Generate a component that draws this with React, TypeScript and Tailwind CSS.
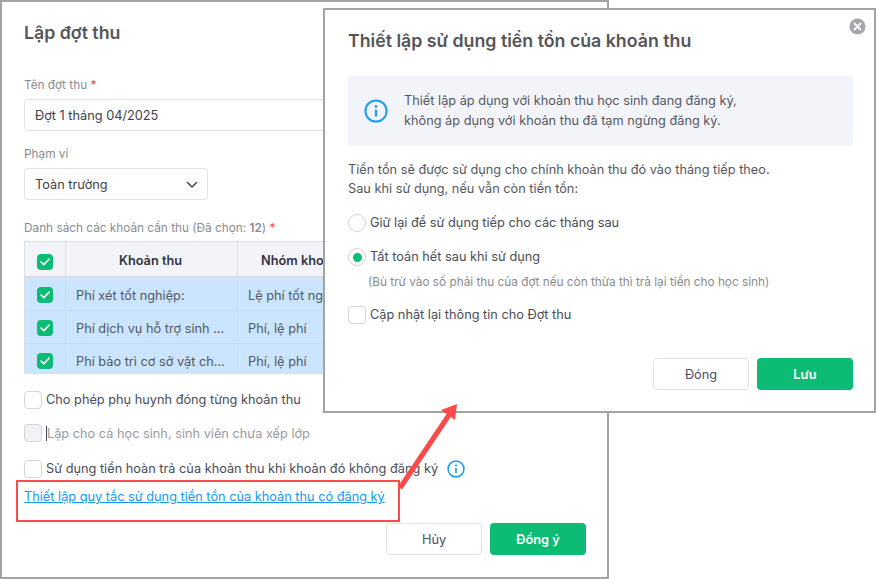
const rows = [
  { name: "Phí xét tốt nghiệp:", group: "Lệ phí tốt nghiệp" },
  { name: "Phí dịch vụ hỗ trợ sinh ...", group: "Phí, lệ phí" },
  { name: "Phí bảo trì cơ sở vật ch...", group: "Phí, lệ phí" },
];

function GreenCheck({ size }: { size: string }) {
  return (
    <span className={`flex items-center justify-center rounded-[4px] bg-[#0cbc74] ${size}`}>
      <svg width="10" height="8" viewBox="0 0 10 8" fill="none">
        <path d="M1 4l2.8 2.6L9 1.2" stroke="#fff" strokeWidth="1.6" strokeLinecap="round" strokeLinejoin="round" />
      </svg>
    </span>
  );
}

function EmptyBox({ disabled }: { disabled?: boolean }) {
  return (
    <span
      className={`block h-[18px] w-[18px] shrink-0 rounded-[4px] border border-[#d4d5da] ${
        disabled ? "bg-[#f2f3f7]" : "bg-white"
      }`}
    />
  );
}

function InfoIcon({ size }: { size: number }) {
  return (
    <svg width={size} height={size} viewBox="0 0 24 24" fill="none" className="shrink-0">
      <circle cx="12" cy="12" r="10.6" stroke="#1a9cf0" strokeWidth="2" />
      <rect x="10.9" y="10.4" width="2.2" height="7.2" rx="0.6" fill="#1a9cf0" />
      <circle cx="12" cy="7.4" r="1.4" fill="#1a9cf0" />
    </svg>
  );
}

function LeftWindow() {
  return (
    <div className="absolute left-0 top-0 flex h-[579px] w-[609px] flex-col border-2 border-[#a3a3a3] bg-white pl-[22px] pr-[21px] pt-[20px] text-[12.75px] text-[#4a4c58]">
      <h1 className="h-[22px] text-[17.75px] font-semibold leading-[22px] text-[#555559]">Lập đợt thu</h1>

      <label className="mt-[32px] h-[18px] text-[11.8px] leading-[18px] text-[#8a8b90]">
        Tên đợt thu <span className="text-[#f04a4a]">*</span>
      </label>
      <div className="mt-[5px] flex h-[32px] items-center rounded-[4px] border border-[#e2e3e7] px-[10px] pt-[2px] text-[#3d3f4a]">
        Đợt 1 tháng 04/2025
      </div>

      <label className="mt-[14px] h-[18px] text-[11.8px] leading-[18px] text-[#8a8b90]">Phạm vi</label>
      <div className="mt-[5px] flex h-[32px] w-[184px] items-center justify-between rounded-[4px] border border-[#e2e3e7] pl-[10px] pr-[9px] pt-[2px] text-[#3d3f4a]">
        Toàn trường
        <svg width="12" height="8" viewBox="0 0 12 8" fill="none">
          <path d="M1.5 1.5L6 6l4.5-4.5" stroke="#444654" strokeWidth="1.5" strokeLinecap="round" strokeLinejoin="round" />
        </svg>
      </div>

      <p className="mt-[19px] h-[18px] text-[11.8px] leading-[18px] text-[#8a8b90]">
        Danh sách các khoản cần thu (Đã chọn: <b className="font-semibold">12</b>) <span className="text-[#f04a4a]">*</span>
      </p>

      <div className="mt-[4px] h-[133px] shrink-0 overflow-hidden border border-[#dcdde6]">
        <div className="flex h-[36px] border-b-2 border-[#dcdde6] bg-[#f3f4f9] font-semibold text-[#33343c]">
          <div className="flex w-[41px] items-center justify-center border-r border-[#dcdde6] pt-[6px]">
            <GreenCheck size="h-[16px] w-[16px]" />
          </div>
          <div className="flex w-[172px] items-center justify-center border-r border-[#dcdde6] pr-[2px] pt-[4px]">Khoản thu</div>
          <div className="flex flex-1 items-center pl-[23px] pt-[4px]">Nhóm khoản thu</div>
        </div>
        {rows.map((row) => (
          <div key={row.name} className="flex h-[33px] border-b border-[#d3dbe9] bg-[#cae5fd] pt-[2px] text-[#55575f]">
            <div className="flex w-[41px] items-center justify-center border-r border-[#d3dbe9]">
              <GreenCheck size="h-[16px] w-[16px]" />
            </div>
            <div className="flex w-[172px] items-center border-r border-[#d3dbe9] pl-[10px] pt-[2px]">{row.name}</div>
            <div className="flex flex-1 items-center pl-[10px] pt-[2px]">{row.group}</div>
          </div>
        ))}
      </div>

      <div className="mt-[17px] flex h-[18px] items-center gap-[4px]">
        <EmptyBox />
        <span>Cho phép phụ huynh đóng từng khoản thu</span>
      </div>
      <div className="mt-[15px] flex h-[18px] items-center gap-[4px] text-[#9a9ba0]">
        <EmptyBox disabled />
        <span className="border-l border-[#444654] leading-[15px]">Lập cho cả học sinh, sinh viên chưa xếp lớp</span>
      </div>
      <div className="mt-[18px] flex h-[18px] items-center gap-[4px]">
        <EmptyBox />
        <span>Sử dụng tiền hoàn trả của khoản thu khi khoản đó không đăng ký</span>
        <span className="ml-[5px]"><InfoIcon size={18} /></span>
      </div>

      <a className="mt-[10px] h-[18px] leading-[18px] text-[#159bee] underline">
        Thiết lập quy tắc sử dụng tiền tồn của khoản thu có đăng ký
      </a>

      <div className="mt-[17px] flex justify-end gap-[8px]">
        <button className="h-[32px] w-[96px] rounded-[4px] border border-[#e2e3e7] bg-white pt-[2px] text-[#4c4e6a]">Hủy</button>
        <button className="h-[32px] w-[96px] rounded-[4px] bg-[#0cbc74] pt-[2px] font-semibold text-white">Đồng ý</button>
      </div>
    </div>
  );
}

function RightModal() {
  return (
    <div className="absolute left-[323px] top-[8px] flex h-[405px] w-[553px] flex-col border-2 border-[#a3a3a3] bg-white pl-[23px] pr-[21px] pt-[20px] text-[12.75px] text-[#4a4c58]">
      <svg width="17" height="17" viewBox="0 0 17 17" className="absolute right-[8px] top-[8px]">
        <circle cx="8.5" cy="8.5" r="8" fill="#a6a7ab" />
        <path d="M5.5 5.5l6 6M11.5 5.5l-6 6" stroke="#fff" strokeWidth="1.8" strokeLinecap="round" />
      </svg>
      <h2 className="h-[22px] text-[17.75px] font-semibold leading-[22px] text-[#555559]">Thiết lập sử dụng tiền tồn của khoản thu</h2>

      <div className="mt-[24px] flex h-[70px] items-center gap-[16px] rounded-[4px] bg-[#f3f4f9] pl-[16px]">
        <InfoIcon size={24} />
        <p className="leading-[20px] text-[#55575f]">
          Thiết lập áp dụng với khoản thu học sinh đang đăng ký,
          <br />
          không áp dụng với khoản thu đã tạm ngừng đăng ký.
        </p>
      </div>

      <p className="mt-[14px] leading-[19px] text-[#55575f]">
        Tiền tồn sẽ được sử dụng cho chính khoản thu đó vào tháng tiếp theo.
        <br />
        Sau khi sử dụng, nếu vẫn còn tiền tồn:
      </p>

      <div className="mt-[16px] flex h-[18px] items-center gap-[4px]">
        <span className="block h-[18px] w-[18px] rounded-full border border-[#d4d5da]" />
        <span>Giữ lại để sử dụng tiếp cho các tháng sau</span>
      </div>
      <div className="mt-[16px] flex h-[18px] items-center gap-[4px]">
        <span className="flex h-[18px] w-[18px] items-center justify-center rounded-full border border-[#d4d5da]">
          <span className="block h-[9px] w-[9px] rounded-full bg-[#0cbc74]" />
        </span>
        <span>Tất toán hết sau khi sử dụng</span>
      </div>
      <p className="ml-[20px] mt-[8px] h-[16px] text-[11.8px] leading-[16px] text-[#8a8b90]">
        (Bù trừ vào số phải thu của đợt nếu còn thừa thì trả lại tiền cho học sinh)
      </p>
      <div className="mt-[16px] flex h-[18px] items-center gap-[4px]">
        <EmptyBox />
        <span>Cập nhật lại thông tin cho Đợt thu</span>
      </div>

      <div className="mt-[34px] flex justify-end gap-[8px]">
        <button className="h-[32px] w-[96px] rounded-[4px] border border-[#e2e3e7] bg-white pt-[2px] text-[#4c4e6a]">Đóng</button>
        <button className="h-[32px] w-[96px] rounded-[4px] bg-[#0cbc74] pt-[2px] font-semibold text-white">Lưu</button>
      </div>
    </div>
  );
}

export default function App() {
  return (
    <div className="relative h-[579px] w-[876px] overflow-hidden bg-white font-['Inter',sans-serif]">
      <LeftWindow />
      <RightModal />
      {/* red callout over the screenshot */}
      <div className="absolute left-[16px] top-[480px] h-[42px] w-[384px] border-2 border-[#fb4a4a]" />
      <svg width="876" height="579" className="pointer-events-none absolute left-0 top-0">
        <path d="M400 488L449 415" stroke="#fb4a4a" strokeWidth="5" />
        <path d="M457 404L455 420L441 410Z" fill="#fb4a4a" />
      </svg>
    </div>
  );
}
